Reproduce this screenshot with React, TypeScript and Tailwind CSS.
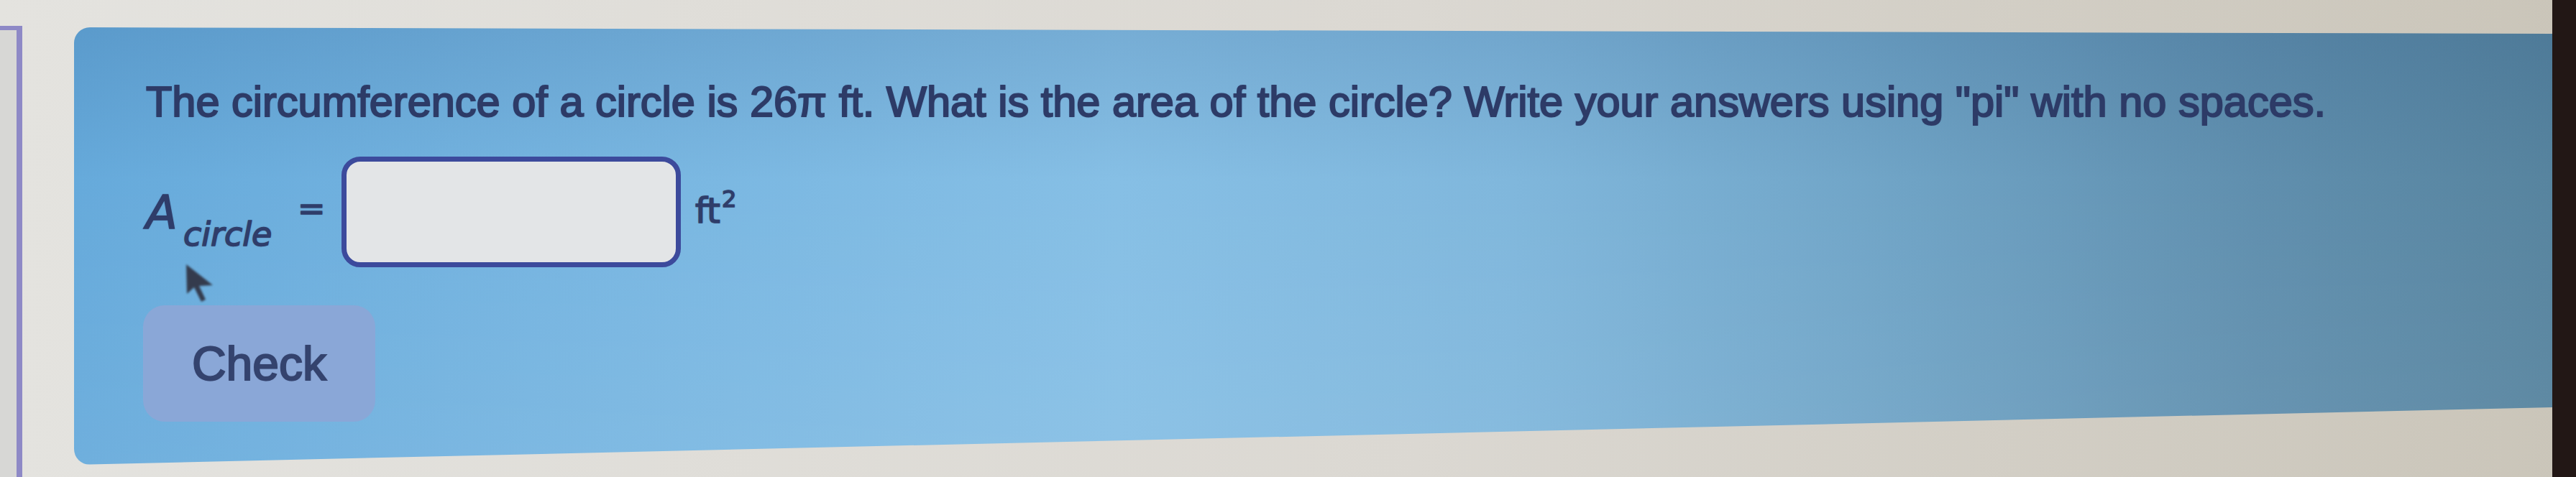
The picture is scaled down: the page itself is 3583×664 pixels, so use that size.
import React from "react";

function Cursor() {
  return (
    <svg
      className="absolute left-[155px] top-[329px] opacity-90 [filter:blur(1.5px)]"
      width="42"
      height="56"
      viewBox="0 0 42 56"
    >
      <polygon points="1,1 2,42 12,33 22,53 28,50 19,31 38,30" fill="#2e2f3e" />
    </svg>
  );
}

export default function App() {
  return (
    <div className="flex h-[664px] w-[3583px] overflow-hidden bg-[linear-gradient(90deg,#e4e3df,#dbd8d2_55%,#cac5b9)] font-['Liberation_Sans',Arial,sans-serif]">
      <div className="mt-[36px] h-[628px] w-[31px] shrink-0 border-t-[6px] border-r-[8px] border-[#8e89c6] bg-[#d7d7d5]" />
      <div className="relative ml-[72px] mt-[38px] h-[609px] w-[3447px] shrink-0 rounded-l-[22px] bg-[image:linear-gradient(180deg,rgba(20,60,110,0.14)_0%,rgba(255,255,255,0)_35%,rgba(255,255,255,0.06)_100%),linear-gradient(90deg,#66aadb_0%,#78b6e1_22%,#86bfe5_42%,#80b7dc_58%,#6fa3c5_74%,#608fae_88%,#57849f_100%)] pl-[100px] pt-[74px] [clip-path:polygon(0_0,100%_9px,100%_529px,0_100%)]">
        <p className="whitespace-nowrap text-[59.5px] leading-[60px] text-[#2d3b67] [-webkit-text-stroke:2px_#2d3b67] [text-shadow:0_0_2px_#2d3b67]">
          The circumference of a circle is 26π ft. What is the area of the circle? Write your answers using "pi" with no spaces.
        </p>
        <div className="mt-[46px] flex h-[154px] items-start text-[#2f3d6a] font-['DejaVu_Sans',sans-serif] [-webkit-text-stroke:1.5px_#2f3d6a] [text-shadow:0_0_2px_#2f3d6a]">
          <span className="mt-[46px] w-[52px] text-[64px] italic leading-[64px]">A</span>
          <span className="mt-[85px] w-[159px] text-[46px] italic leading-[46px]">circle</span>
          <span className="mt-[49px] w-[61px] text-[46px] leading-[46px]">=</span>
          <div className="h-[154px] w-[472px] shrink-0 rounded-[26px] border-[7px] border-[#3c4a9c] bg-[#e3e5e7] [-webkit-text-stroke:0] [text-shadow:none]" />
          <span className="ml-[20px] mt-[51px] text-[48px] leading-[48px]">ft</span>
          <span className="ml-[2px] mt-[43px] text-[32px] leading-[32px]">2</span>
        </div>
        <button className="-ml-[4px] mt-[53px] flex h-[162px] w-[323px] items-center justify-center rounded-[30px] bg-[#8aa7d7] text-[66px] leading-[66px] text-[#34436e] [-webkit-text-stroke:2px_#34436e] [text-shadow:0_0_2px_#34436e]">
          Check
        </button>
        <Cursor />
      </div>
      <div className="h-full w-[33px] shrink-0 bg-[#221715]" />
    </div>
  );
}
